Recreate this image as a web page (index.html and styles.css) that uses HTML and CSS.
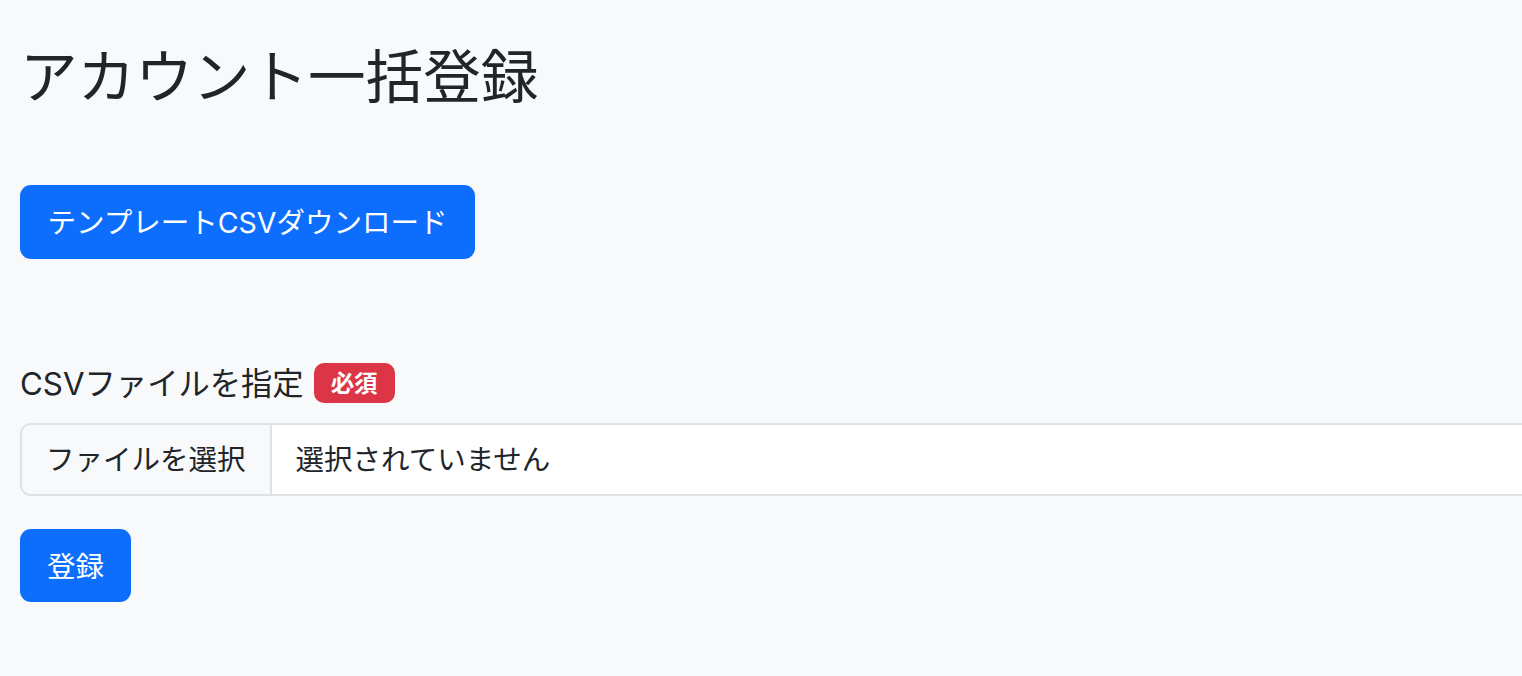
FILE: index.html
```html
<!DOCTYPE html>
<html lang="ja">
<head>
<meta charset="utf-8">
<title>アカウント一括登録</title>
<link rel="stylesheet" href="styles.css">
</head>
<body>
<main class="page">
  <h1 class="title">アカウント一括登録</h1>
  <button class="btn btn-primary btn-template" type="button">テンプレートCSVダウンロード</button>
  <form class="upload-form">
    <div class="field-label">
      <span class="label-text">CSVファイルを指定</span>
      <span class="badge">必須</span>
    </div>
    <div class="file-input">
      <span class="file-button">ファイルを選択</span>
      <span class="file-name">選択されていません</span>
    </div>
    <button class="btn btn-primary btn-submit" type="button">登録</button>
  </form>
</main>
</body>
</html>
```
FILE: styles.css
```css
html {
  overflow: hidden;
}

body {
  margin: 0;
  background: #f8f9fa;
  color: #212529;
  font-family: Inter, "Noto Sans CJK JP", sans-serif;
  font-size: 28.5px;
}

.page {
  padding: 44px 20px 0;
  display: flex;
  flex-direction: column;
  align-items: flex-start;
}

.title {
  margin: 0;
  font-size: 57.6px;
  line-height: 66px;
  font-weight: 400;
}

.btn {
  font-family: inherit;
  font-size: 28.5px;
  height: 74px;
  padding: 0 27px 3px;
  border: none;
  border-radius: 11px;
  color: #fff;
  cursor: pointer;
}

.btn-primary {
  background: #0d6efd;
}

.btn-template {
  margin-top: 75px;
  padding: 0 27.5px 3px;
}

.upload-form {
  margin-top: 102px;
  display: flex;
  flex-direction: column;
  align-items: flex-start;
}

.field-label {
  height: 43px;
  display: flex;
  align-items: center;
  gap: 10px;
}

.label-text {
  font-size: 31.3px;
  padding-bottom: 3px;
}

.badge {
  background: #dc3545;
  color: #fff;
  font-size: 23.5px;
  font-weight: 700;
  height: 40px;
  box-sizing: border-box;
  padding: 0 17px 2px;
  border-radius: 10px;
  display: flex;
  align-items: center;
}

.file-input {
  margin-top: 19px;
  width: 1600px;
  height: 73px;
  box-sizing: border-box;
  border: 2px solid #dee2e6;
  border-radius: 11px;
  background: #fff;
  display: flex;
  overflow: hidden;
}

.file-button {
  background: #f8f9fa;
  border-right: 2px solid #dee2e6;
  padding: 0 24px 4px;
  display: flex;
  align-items: center;
}

.file-name {
  padding: 0 24px 4px;
  display: flex;
  align-items: center;
}

.btn-submit {
  margin-top: 33px;
  height: 73px;
}
```
